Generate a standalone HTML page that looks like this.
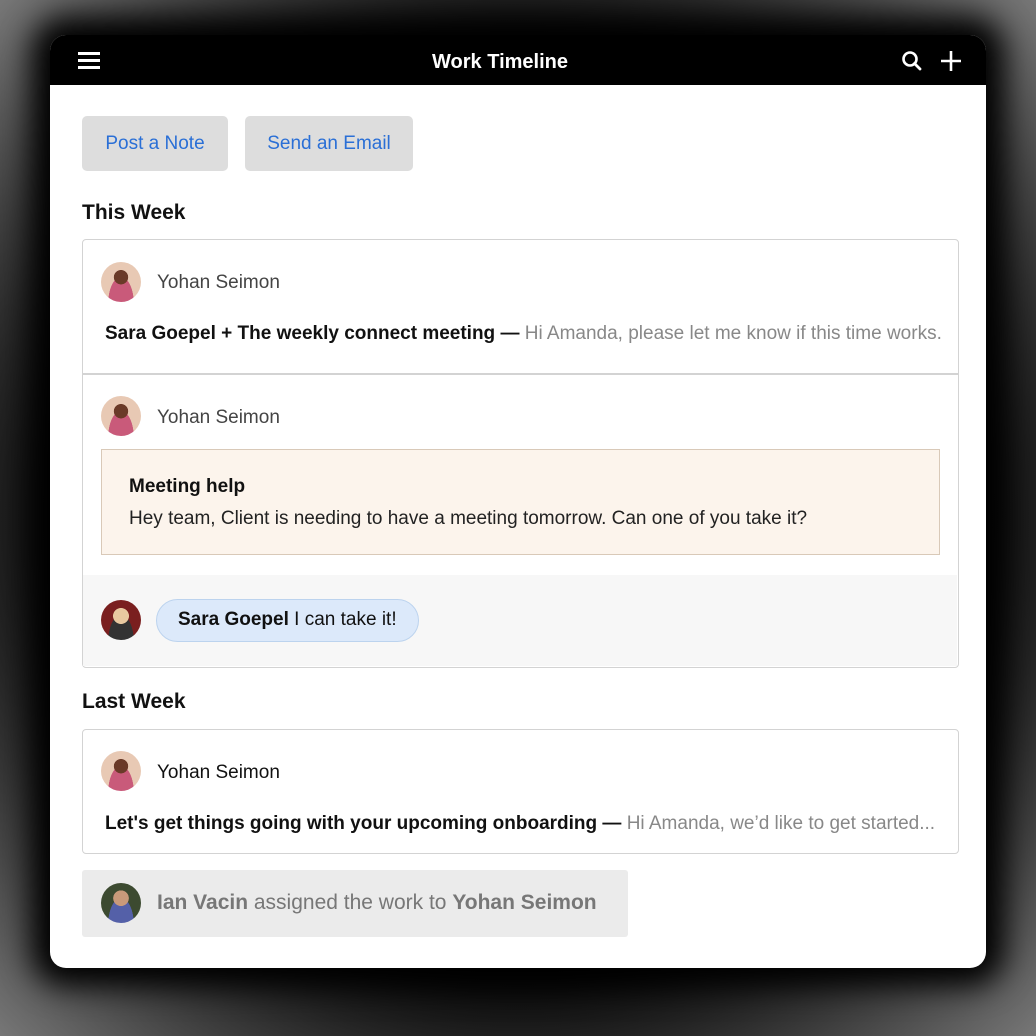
<!DOCTYPE html>
<html><head><meta charset="utf-8"><style>
*{box-sizing:border-box;margin:0;padding:0}
html,body{width:1036px;height:1036px;overflow:hidden;background:#8a8a8a}
body{position:relative;font-family:"Liberation Sans",sans-serif;color:#111}
.bgfade{position:absolute;inset:0;background:radial-gradient(ellipse at center,#000 60%,#222 72%,#777 100%)}
.card{position:absolute;left:50px;top:35px;width:936px;height:933px;background:#fff;border-radius:16px;overflow:hidden;box-shadow:0 0 30px 18px #000}
.hdr{position:absolute;left:0;top:0;width:936px;height:50px;background:#000;color:#fff}
.hdr .t{position:absolute;left:0;width:900px;top:16px;text-align:center;font-weight:bold;font-size:20px}
.a{position:absolute}
.btn{position:absolute;top:81px;height:55px;background:#dddddd;border-radius:5px;color:#2a6fd6;font-size:19px;line-height:55px;text-align:center}
.h{position:absolute;font-size:21px;font-weight:bold;color:#111}
.box{position:absolute;border:1.5px solid #d3d3d3;border-radius:4px;background:#fff}
.av{position:absolute;width:40px;height:40px;border-radius:50%;overflow:hidden}
.av1{background:radial-gradient(circle at 50% 38%,#6a3a28 0 22%,transparent 23%),radial-gradient(ellipse at 50% 105%,#c95a7a 0 45%,transparent 46%),#e8c9b4}
.av2{background:radial-gradient(circle at 50% 40%,#e9c9a0 0 25%,transparent 26%),radial-gradient(ellipse at 50% 105%,#333 0 45%,transparent 46%),#7a1f1f}
.av3{background:radial-gradient(circle at 50% 38%,#c99a7a 0 24%,transparent 25%),radial-gradient(ellipse at 50% 105%,#5460a8 0 45%,transparent 46%),#3c4a30}
.nm{position:absolute;font-size:19px;color:#444}
.ln{position:absolute;font-size:19px;white-space:nowrap;font-weight:bold;color:#111}
.ln span{font-weight:normal;color:#888}
</style></head><body>
<div class="bgfade"></div>
<div class="card">
 <div class="hdr">
  <div class="a" style="left:28px;top:17px;width:22px;height:3px;background:#fff"></div>
  <div class="a" style="left:28px;top:24px;width:22px;height:3px;background:#fff"></div>
  <div class="a" style="left:28px;top:31px;width:22px;height:3px;background:#fff"></div>
  <div class="t">Work Timeline</div>
  <svg class="a" style="left:850px;top:14px" width="24" height="24" viewBox="0 0 24 24"><circle cx="10" cy="10" r="6.5" stroke="#fff" stroke-width="2.6" fill="none"/><path d="M14.5 14.5L20 20" stroke="#fff" stroke-width="2.8" stroke-linecap="round"/></svg>
  <svg class="a" style="left:889px;top:14px" width="24" height="24" viewBox="0 0 24 24"><path d="M12 2v20M2 12h20" stroke="#fff" stroke-width="2.6"/></svg>
 </div>
 <div class="btn" style="left:32px;width:146px">Post a Note</div>
 <div class="btn" style="left:195px;width:168px">Send an Email</div>
 <div class="h" style="left:32px;top:166px">This Week</div>
 <div class="box" style="left:32px;top:204px;width:877px;height:429px"></div>
 <div class="a" style="left:33px;top:338px;width:875px;height:1.5px;background:#d3d3d3"></div>
 <div class="a" style="left:33px;top:540px;width:874px;height:91px;background:#f7f7f7"></div>
 <div class="av av1" style="left:51px;top:227px"></div>
 <div class="nm" style="left:107px;top:237px">Yohan Seimon</div>
 <div class="ln" style="left:55px;top:288px">Sara Goepel + The weekly connect meeting — <span>Hi Amanda, please let me know if this time works.</span></div>
 <div class="av av1" style="left:51px;top:361px"></div>
 <div class="nm" style="left:107px;top:372px">Yohan Seimon</div>
 <div class="a" style="left:51px;top:414px;width:839px;height:106px;background:#fcf4ec;border:1.5px solid #d9c9b8"></div>
 <div class="a" style="left:79px;top:441px;font-size:19px;font-weight:bold">Meeting help</div>
 <div class="a" style="left:79px;top:473px;font-size:19px;color:#222">Hey team, Client is needing to have a meeting tomorrow. Can one of you take it?</div>
 <div class="av av2" style="left:51px;top:565px"></div>
 <div class="a" style="left:106px;top:564px;width:263px;height:43px;border-radius:22px;background:#dce9fa;border:1.5px solid #bcd3ee;font-size:19px;line-height:40px;padding-left:21px;color:#111"><b>Sara Goepel</b> I can take it!</div>
 <div class="h" style="left:32px;top:655px">Last Week</div>
 <div class="box" style="left:32px;top:694px;width:877px;height:125px"></div>
 <div class="av av1" style="left:51px;top:716px"></div>
 <div class="nm" style="left:107px;top:727px;color:#111">Yohan Seimon</div>
 <div class="ln" style="left:55px;top:778px">Let's get things going with your upcoming onboarding — <span>Hi Amanda, we’d like to get started...</span></div>
 <div class="a" style="left:32px;top:835px;width:546px;height:67px;background:#ebebeb;border-radius:3px"></div>
 <div class="av av3" style="left:51px;top:848px"></div>
 <div class="a" style="left:107px;top:856px;font-size:21px;color:#777;white-space:nowrap"><b>Ian Vacin</b> assigned the work to <b>Yohan Seimon</b></div>
</div>
</body></html>
